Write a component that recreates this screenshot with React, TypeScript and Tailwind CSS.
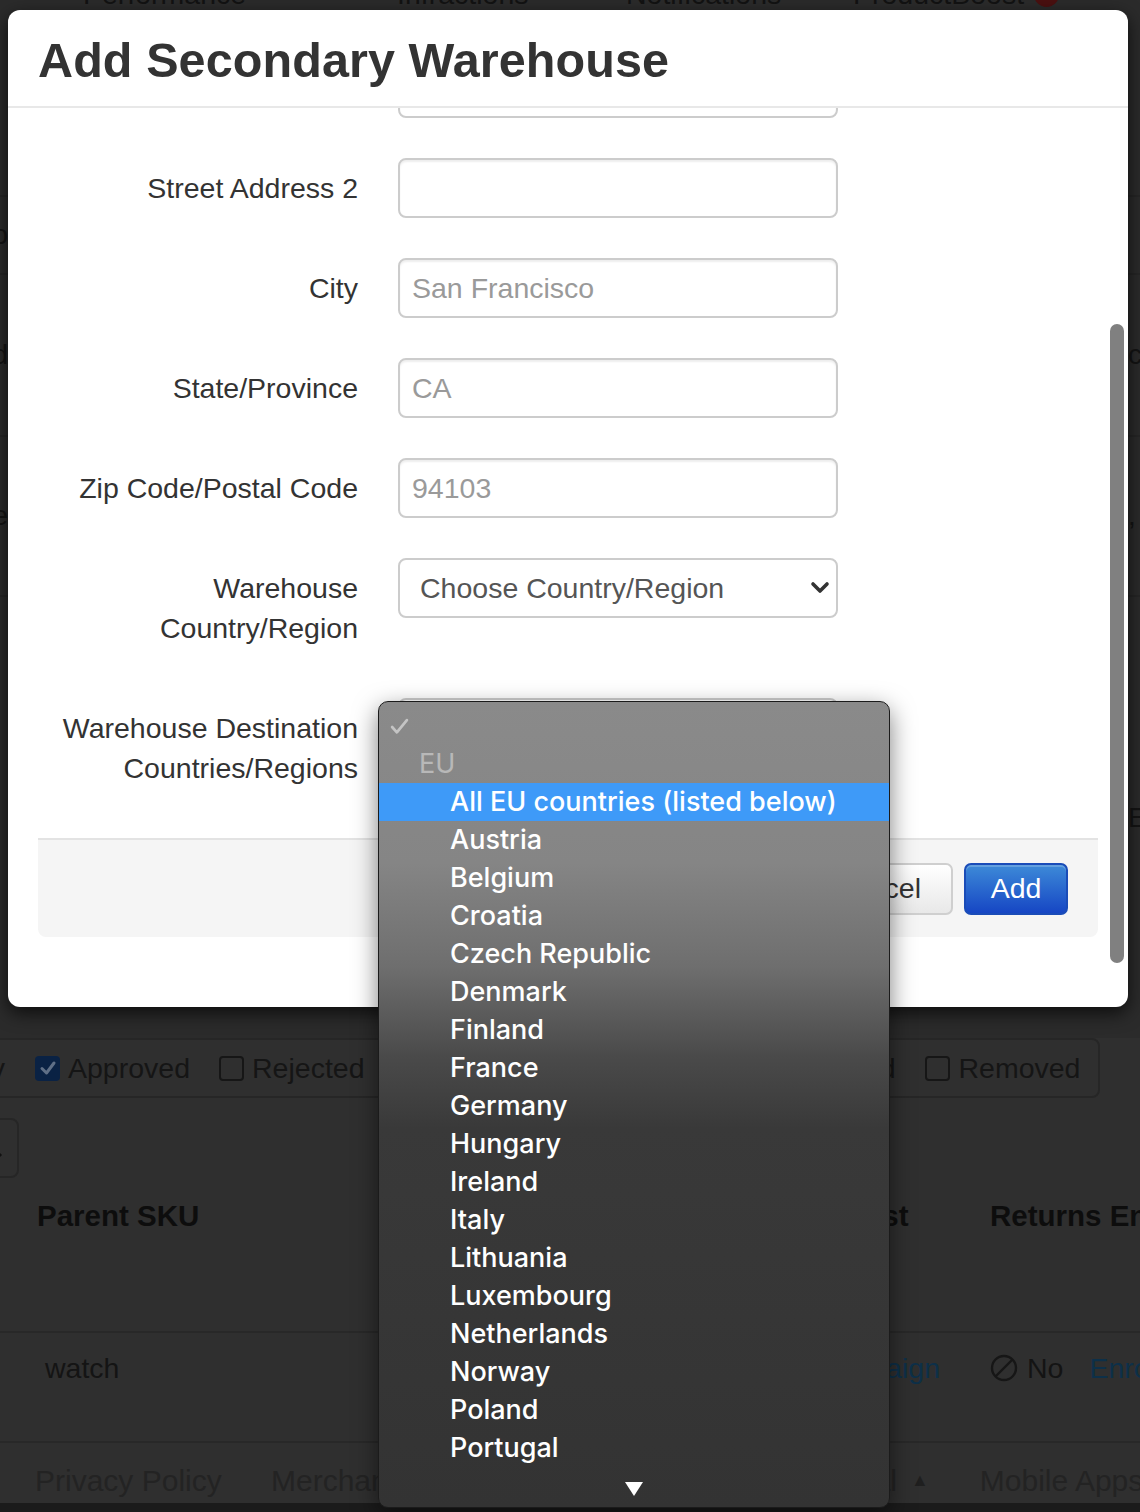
import React from "react";

const countries = [
  "Austria",
  "Belgium",
  "Croatia",
  "Czech Republic",
  "Denmark",
  "Finland",
  "France",
  "Germany",
  "Hungary",
  "Ireland",
  "Italy",
  "Lithuania",
  "Luxembourg",
  "Netherlands",
  "Norway",
  "Poland",
  "Portugal",
];

function EdgeRow({
  h,
  left,
  right,
  line = true,
}: {
  h: string;
  left?: string;
  right?: string;
  line?: boolean;
}) {
  return (
    <div className={`${h} flex items-center justify-between ${line ? "border-b-2 border-[#262626]" : ""}`}>
      <div className="w-[8px] flex justify-end whitespace-nowrap text-[28px] text-[#141414]">{left}</div>
      <div className="w-[12px] flex justify-start whitespace-nowrap text-[28px] text-[#141414]">{right}</div>
    </div>
  );
}

function Checkbox({ checked }: { checked?: boolean }) {
  if (checked) {
    return (
      <div className="w-[25px] h-[25px] rounded-[4px] bg-[#0a2244] flex items-center justify-center">
        <svg width="18" height="18" viewBox="0 0 18 18">
          <polyline points="3,9.5 7.5,14 15,4" fill="none" stroke="#5f6f86" strokeWidth="3" strokeLinecap="round" strokeLinejoin="round" />
        </svg>
      </div>
    );
  }
  return <div className="w-[25px] h-[25px] rounded-[4px] border-2 border-[#161616]" />;
}

function FieldRow({
  label,
  children,
}: {
  label: React.ReactNode;
  children: React.ReactNode;
}) {
  return (
    <div className="flex items-start mb-[40px]">
      <div className="w-[320px] shrink-0 text-right py-[10px] text-[28.5px] leading-[40px] text-[#333333] whitespace-nowrap">
        {label}
      </div>
      <div className="ml-[40px] shrink-0">{children}</div>
    </div>
  );
}

function TextBox({ placeholder }: { placeholder?: string }) {
  return (
    <input
      readOnly
      placeholder={placeholder}
      className="block w-[440px] h-[60px] rounded-[8px] border-2 border-[#cccccc] bg-white px-[12px] text-[28.5px] text-[#555] placeholder:text-[#9a9a9a] shadow-[inset_0_2px_2px_rgba(0,0,0,0.07)] outline-none font-['Liberation_Sans',Arial,sans-serif]"
    />
  );
}

function SelectBox({ text }: { text?: string }) {
  return (
    <div className="w-[440px] h-[60px] rounded-[8px] border-2 border-[#cccccc] bg-white flex items-center justify-between pl-[20px] pr-[6px] text-[28.5px] text-[#555555]">
      <span>{text}</span>
      {text ? (
        <svg width="20" height="14" viewBox="0 0 20 14">
          <polyline points="3,3 10,10 17,3" fill="none" stroke="#333" strokeWidth="3.6" strokeLinecap="round" strokeLinejoin="round" />
        </svg>
      ) : null}
    </div>
  );
}

export default function App() {
  return (
    <div className="relative w-[1140px] h-[1512px] overflow-hidden bg-[#2f2f2f] font-['Liberation_Sans',Arial,sans-serif]">
      {/* ---------- underlying (dimmed) page ---------- */}
      <div className="h-[10px] overflow-hidden bg-[#2b2b2b]">
        <div className="flex items-center h-[36px] -mt-[24px] pl-[83px] text-[28.5px] text-[#121212] whitespace-nowrap">
          <span className="w-[314px] shrink-0">Performance</span>
          <span className="w-[229px] shrink-0">Infractions</span>
          <span className="w-[227px] shrink-0">Notifications</span>
          <span className="shrink-0">ProductBoost</span>
          <span className="ml-[10px] w-[25px] h-[25px] shrink-0 rounded-full bg-[#4a1010]" />
        </div>
      </div>

      <div className="h-[1028px] bg-[#2b2b2b] flex flex-col">
        <EdgeRow h="h-[187px]" />
        <EdgeRow h="h-[78px]" left="Co" />
        <EdgeRow h="h-[162px]" left="Sold" right="co" />
        <EdgeRow h="h-[160px]" left="Type" right="," />
        <EdgeRow h="h-[441px]" right="Ed" line={false} />
      </div>

      {/* filter row */}
      <div className="h-[60px] w-[1120px] -ml-[20px] border-2 border-[#262626] rounded-r-[8px] flex items-center text-[28.5px] text-[#151515] whitespace-nowrap">
        <span className="w-[23px] shrink-0 flex justify-end">
          <span>v</span>
        </span>
        <span className="ml-[30px] shrink-0">
          <Checkbox checked />
        </span>
        <span className="ml-[8px] shrink-0">Approved</span>
        <span className="ml-[29px] shrink-0">
          <Checkbox />
        </span>
        <span className="ml-[8px] shrink-0">Rejected</span>
        <span className="w-[531px] shrink-0 text-right">Suspended</span>
        <span className="ml-[29px] shrink-0">
          <Checkbox />
        </span>
        <span className="ml-[9px] shrink-0">Removed</span>
      </div>

      {/* search stub */}
      <div className="mt-[20px] h-[60px] w-[60px] -ml-[41px] border-2 border-[#262626] rounded-r-[8px] flex items-center justify-end pr-[14px]">
        <svg width="20" height="20" viewBox="0 0 20 20">
          <circle cx="8" cy="8" r="6" fill="none" stroke="#111" strokeWidth="3" />
          <line x1="12.5" y1="12.5" x2="18" y2="18" stroke="#111" strokeWidth="3" />
        </svg>
      </div>

      {/* table header */}
      <div className="h-[153px] flex items-start pt-[18px] pl-[37px] text-[29.5px] font-bold text-[#0d0d0d] whitespace-nowrap leading-[40px]">
        <span className="w-[806px] shrink-0">Parent SKU</span>
        <span className="w-[60px] shrink-0 text-right">Cost</span>
        <span className="ml-[87px] shrink-0">Returns Enrolled</span>
      </div>
      <div className="h-[110px] border-t-2 border-[#282828] flex items-start pt-[15px] pl-[45px] text-[28.5px] text-[#141414] whitespace-nowrap leading-[40px]">
        <span className="w-[755px] shrink-0">watch</span>
        <span className="w-[140px] shrink-0 text-right text-[#0d3049]">Campaign</span>
        <span className="ml-[50px] shrink-0 flex items-center">
          <svg width="28" height="28" viewBox="0 0 28 28">
            <circle cx="14" cy="14" r="12" fill="none" stroke="#161616" strokeWidth="2.4" />
            <line x1="6" y1="22" x2="22" y2="6" stroke="#161616" strokeWidth="2.4" />
          </svg>
          <span className="ml-[9px]">No</span>
        </span>
        <span className="ml-[26px] shrink-0 text-[#0d3049]">Enroll</span>
      </div>
      <div className="h-[62px] border-t-2 border-[#282828] flex items-center pt-[14px] pl-[35px] text-[30px] text-[#232323] whitespace-nowrap">
        <span className="w-[236px] shrink-0">Privacy Policy</span>
        <span className="w-[300px] shrink-0">Merchant Terms</span>
        <span className="w-[326px] shrink-0 text-right">Language: Global</span>
        <span className="ml-[14px] shrink-0 text-[18px] text-[#1f1f1f]">▲</span>
        <span className="ml-[51px] shrink-0">Mobile Apps</span>
      </div>
      <div className="h-[20px] bg-[#1b1b1b]" />

      {/* ---------- modal ---------- */}
      <div className="absolute left-[8px] top-[10px] w-[1120px] h-[997px] bg-white rounded-[12px] shadow-[0_6px_18px_rgba(0,0,0,0.7)] overflow-hidden flex flex-col">
        <div className="h-[98px] shrink-0 border-b-2 border-[#e8e8e8] px-[30px] flex items-center">
          <h1 className="text-[48.5px] font-bold text-[#333333] leading-none pt-[4px] tracking-[0.1px]">Add Secondary Warehouse</h1>
        </div>
        <div className="relative flex-1 overflow-hidden">
          <div className="-mt-[50px] px-[30px]">
            <FieldRow label="Street Address 1">
              <TextBox />
            </FieldRow>
            <FieldRow label="Street Address 2">
              <TextBox />
            </FieldRow>
            <FieldRow label="City">
              <TextBox placeholder="San Francisco" />
            </FieldRow>
            <FieldRow label="State/Province">
              <TextBox placeholder="CA" />
            </FieldRow>
            <FieldRow label="Zip Code/Postal Code">
              <TextBox placeholder="94103" />
            </FieldRow>
            <FieldRow
              label={
                <>
                  Warehouse
                  <br />
                  Country/Region
                </>
              }
            >
              <SelectBox text="Choose Country/Region" />
            </FieldRow>
            <FieldRow
              label={
                <>
                  Warehouse Destination
                  <br />
                  Countries/Regions
                </>
              }
            >
              <SelectBox />
            </FieldRow>
            <div className="border-t-2 border-[#e3e3e3] bg-[#f5f5f5] rounded-b-[8px] h-[99px] flex items-center justify-end gap-[11px] pr-[30px]">
              <button className="h-[52px] pl-[28px] pr-[30px] rounded-[7px] border-2 border-[#cfcfcf] bg-[linear-gradient(180deg,#ffffff,#e8e8e8)] text-[28.5px] text-[#333333]">
                Cancel
              </button>
              <button className="h-[52px] w-[104px] rounded-[7px] border-2 border-[#1a4cb8] bg-[linear-gradient(180deg,#3d8ad8,#1646c4)] text-[28.5px] text-white shadow-[inset_0_2px_0_rgba(255,255,255,0.2)]">
                Add
              </button>
            </div>
          </div>
          <div className="absolute right-[4px] top-[216px] w-[14px] h-[639px] rounded-full bg-[#808080]" />
        </div>
      </div>

      {/* ---------- native dropdown menu ---------- */}
      <div className="absolute left-[378px] top-[701px] w-[512px] h-[807px] rounded-[10px] border border-[#1b1b1b] overflow-hidden shadow-[0_8px_24px_rgba(0,0,0,0.5)] bg-[linear-gradient(180deg,#8a8a8a_0%,#858585_20%,#6e6e6e_33%,#4a4a4a_44%,#393939_53%,#333333_100%)] font-['Inter','Liberation_Sans',sans-serif] font-medium text-[27px] text-white">
        <div className="pt-[5px]">
          <div className="h-[38px] flex items-center pl-[11px]">
            <svg width="19" height="19" viewBox="0 0 18 18">
              <polyline points="2,9.5 6.5,14.5 16,3" fill="none" stroke="#c4c4c4" strokeWidth="2.6" strokeLinecap="round" strokeLinejoin="round" />
            </svg>
          </div>
          <div className="h-[38px] flex items-center pl-[40px] text-[#b8b8b8] font-normal">EU</div>
          <div className="h-[38px] flex items-center pl-[71px] bg-[#3e9af8]">All EU countries (listed below)</div>
          {countries.map((c) => (
            <div key={c} className="h-[38px] flex items-center pl-[71px]">
              {c}
            </div>
          ))}
          <div className="h-[38px] flex items-center justify-center pt-[6px]">
            <svg width="20" height="16" viewBox="0 0 20 16">
              <polygon points="1,1 19,1 10,15" fill="#ffffff" />
            </svg>
          </div>
        </div>
      </div>
    </div>
  );
}
